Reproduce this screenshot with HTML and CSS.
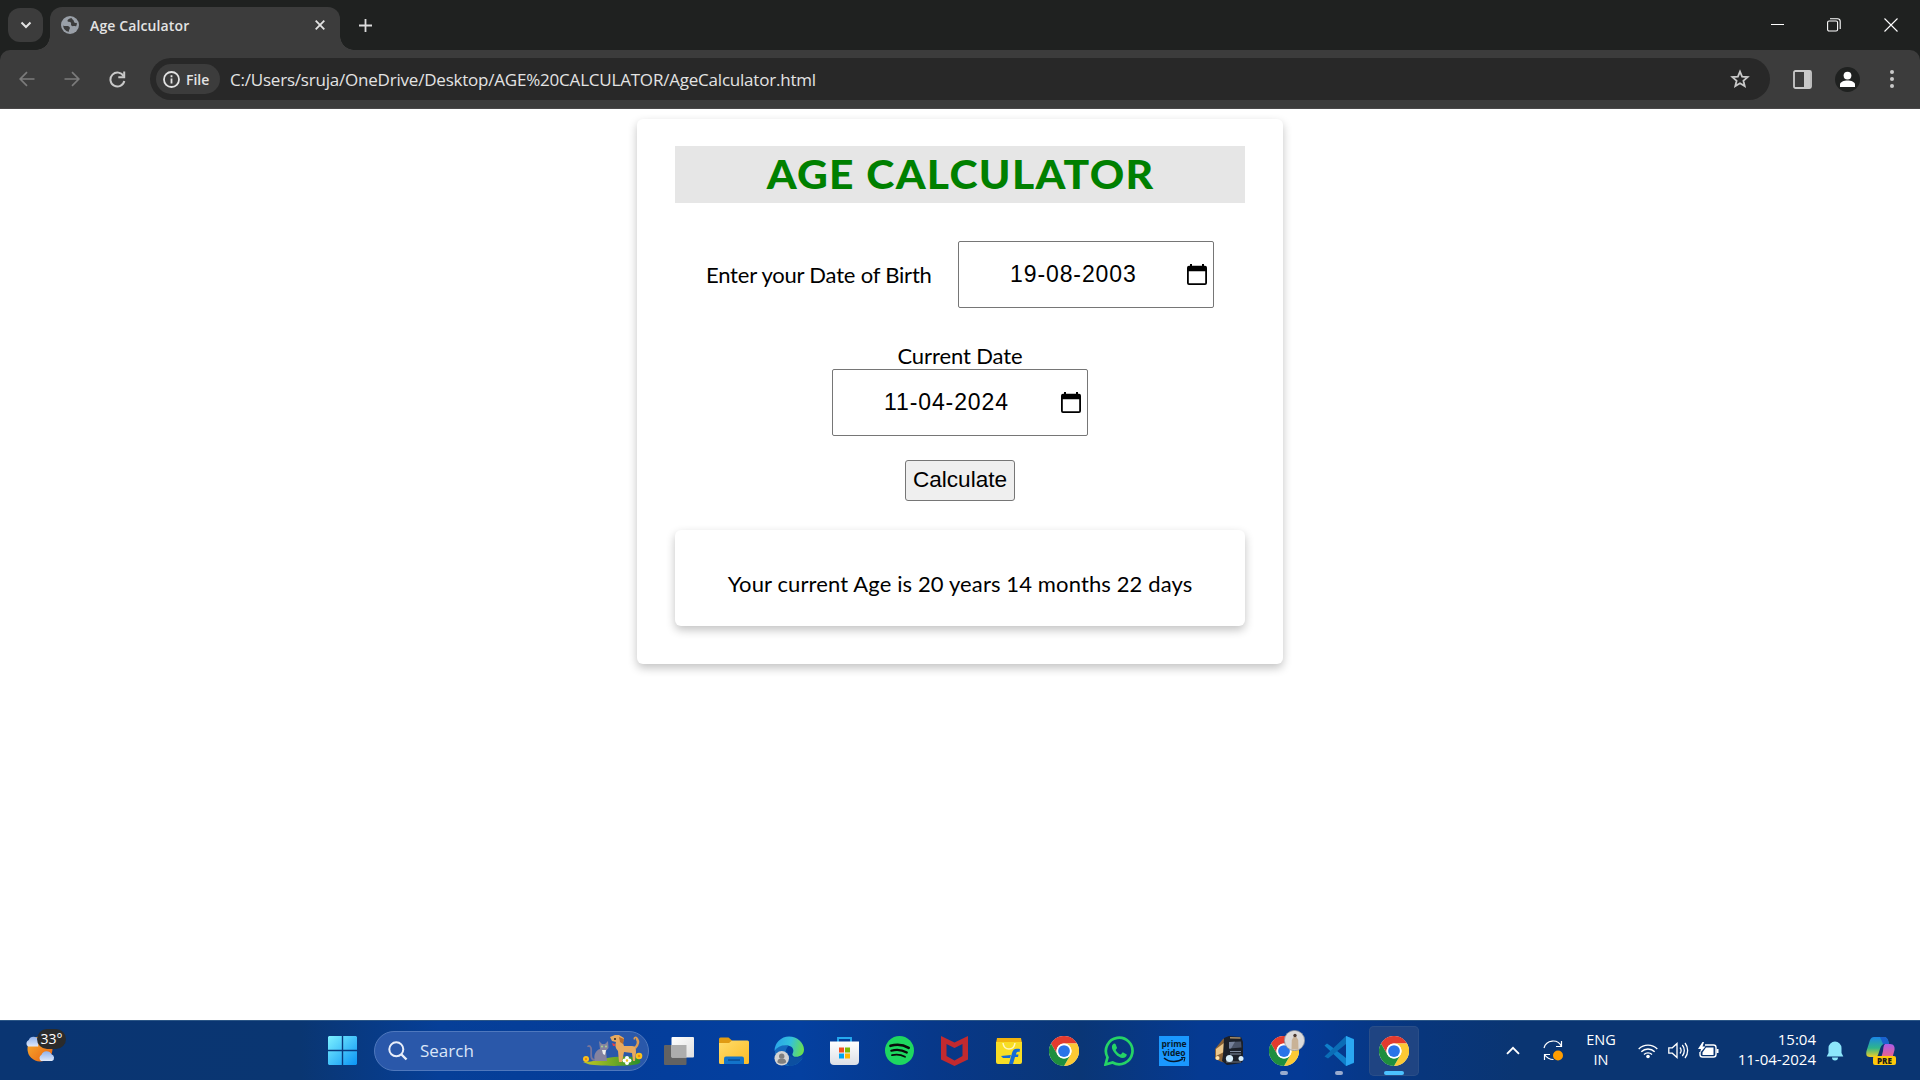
FILE: index.html
```html
<!DOCTYPE html>
<html lang="en">
<head>
<meta charset="utf-8">
<title>Age Calculator</title>
<link rel="stylesheet" href="styles.css">
</head>
<body>
<svg width="0" height="0" class="defs">
  <defs>
    <linearGradient id="win" x1="0" y1="0" x2="1" y2="1"><stop offset="0" stop-color="#7df1ff"/><stop offset="1" stop-color="#0a94f5"/></linearGradient>
    <linearGradient id="sun" x1="0" y1="0" x2="1" y2="1"><stop offset="0" stop-color="#f9b233"/><stop offset="1" stop-color="#e8600f"/></linearGradient>
    <linearGradient id="cloud" x1="0" y1="0" x2="0" y2="1"><stop offset="0" stop-color="#8fb2ee"/><stop offset="1" stop-color="#dfe9fb"/></linearGradient>
    <linearGradient id="folder" x1="0" y1="0" x2="1" y2="1"><stop offset="0" stop-color="#ffdc6b"/><stop offset="1" stop-color="#fcbc26"/></linearGradient>
    <linearGradient id="edgeTop" x1="0" y1="0.4" x2="1" y2="0.6"><stop offset="0" stop-color="#2aa4e8"/><stop offset="0.5" stop-color="#33c1dc"/><stop offset="1" stop-color="#6be04b"/></linearGradient>
    <linearGradient id="bag" x1="0" y1="0" x2="0" y2="1"><stop offset="0" stop-color="#fff"/><stop offset="1" stop-color="#dcdfe6"/></linearGradient>
    <linearGradient id="white" x1="0" y1="0" x2="1" y2="1"><stop offset="0" stop-color="#fff"/><stop offset="1" stop-color="#dfdfdf"/></linearGradient>
    <linearGradient id="cop1" x1="0" y1="0" x2="0" y2="1"><stop offset="0" stop-color="#1b86e6"/><stop offset="0.55" stop-color="#2fb58a"/><stop offset="1" stop-color="#f2cf25"/></linearGradient>
    <linearGradient id="cop2" x1="0" y1="0" x2="0" y2="1"><stop offset="0" stop-color="#a95be8"/><stop offset="0.6" stop-color="#e0609e"/><stop offset="1" stop-color="#f58a52"/></linearGradient>
    <linearGradient id="hill" x1="0" y1="0" x2="1" y2="0"><stop offset="0" stop-color="#c2c822"/><stop offset="1" stop-color="#2a8f2c"/></linearGradient>
    <symbol id="chrome" viewBox="0 0 48 48">
      <circle cx="24" cy="24" r="24" fill="#fff"/>
      <path fill="#e33b2e" d="M3.2 12A24 24 0 0 1 44.8 12H24A12 12 0 0 0 13.6 30Z"/>
      <path fill="#fcc934" d="M44.8 12A24 24 0 0 1 24 48L34.4 30A12 12 0 0 0 24 12Z"/>
      <path fill="#1e8e3e" d="M24 48A24 24 0 0 1 3.2 12L13.6 30A12 12 0 0 0 34.4 30Z"/>
      <circle cx="24" cy="24" r="12" fill="#fff"/><circle cx="24" cy="24" r="9.4" fill="#2a73e8"/>
    </symbol>
  </defs>
</svg>

<header class="tabstrip">
  <button class="tab-search"><svg width="12" height="8" viewBox="0 0 12 8"><path d="M1.5 1.5 6 6l4.500-4.500" fill="none" stroke="#e3e3e3" stroke-width="2"/></svg></button>
  <div class="tab">
    <svg class="globe" width="18" height="18" viewBox="0 0 18 18"><circle cx="9" cy="9" r="9" fill="#9aa0a8"/><path d="M2.200 9.500C4 11 7 9 8.500 11c1.200 1.700-1 2.500-.5 4.800C5 15.500 2.300 13 2.200 9.500ZM10.500 2C8 2.500 6.300 3.500 6.500 5c.2 1.400 2.500.6 3.300 1.600.8 1.200-.4 2.200.8 3.200 1.500 1 2.500-.6 4.400.7.800-1.300 1-2.500.8-3.700-1.800.6-2.900-.3-3-1.800-.1-1.200-1.600-1.400-2.300-3Z" fill="#3c3c3c"/></svg>
    <span class="tab-title">Age Calculator</span>
    <svg width="10" height="10" viewBox="0 0 10 10"><path d="m.7.7 8.600 8.600M9.300.7.7 9.300" stroke="#e3e3e3" stroke-width="1.800"/></svg>
  </div>
  <svg class="plus" width="13" height="13" viewBox="0 0 13 13"><path d="M6.500 0v13M0 6.500h13" stroke="#dcdcdc" stroke-width="1.800"/></svg>
  <div class="window-buttons">
    <svg width="13" height="13" viewBox="0 0 13 13"><path d="M0 6.500h13" stroke="#fff"/></svg>
    <svg width="14" height="14" viewBox="0 0 14 14"><rect x=".6" y="3" width="10" height="10" rx="1.500" fill="none" stroke="#fff" stroke-width="1.100"/><path d="M3 .8h7.500a2.700 2.700 0 0 1 2.700 2.700V11" fill="none" stroke="#fff" stroke-width="1.100"/></svg>
    <svg width="14" height="14" viewBox="0 0 14 14"><path d="m.5.5 13 13m0-13-13 13" stroke="#fff" stroke-width="1.100"/></svg>
  </div>
</header>

<nav class="toolbar">
  <svg width="16" height="16" viewBox="0 0 16 16"><path d="M15.500 8H2M8 1.200 1.200 8 8 14.800" fill="none" stroke="#7b7b7b" stroke-width="1.700"/></svg>
  <svg width="16" height="16" viewBox="0 0 16 16"><path d="M.5 8H14M8 1.200 14.800 8 8 14.800" fill="none" stroke="#7b7b7b" stroke-width="1.700"/></svg>
  <svg width="17" height="17" viewBox="0 0 17 17"><path d="M14.600 5.200A7 7 0 1 0 15.300 10" fill="none" stroke="#c9c9c9" stroke-width="2"/><path d="M15.200.5v5.800H9.300" fill="none" stroke="#c9c9c9" stroke-width="2"/></svg>
  <div class="omnibox">
    <div class="chip">
      <svg width="17" height="17" viewBox="0 0 17 17"><circle cx="8.500" cy="8.500" r="7.500" fill="none" stroke="#e3e3e3" stroke-width="1.800"/><path d="M8.500 7.500v5M8.500 4.300v1.900" stroke="#e3e3e3" stroke-width="1.800"/></svg>
      <span>File</span>
    </div>
    <span class="url">C:/Users/sruja/OneDrive/Desktop/AGE%20CALCULATOR/AgeCalculator.html</span>
    <svg class="star" width="20" height="20" viewBox="0 0 20 20"><path d="m10 2.600 2.100 5.100 5.500.4-4.200 3.600 1.300 5.400L10 14.200l-4.700 2.900 1.300-5.400L2.400 8.100l5.500-.4Z" fill="none" stroke="#c9c9c9" stroke-width="1.800"/></svg>
  </div>
  <svg class="panel" width="19" height="19" viewBox="0 0 19 19"><rect x="1" y="1" width="17" height="17" rx="1.500" fill="none" stroke="#c9c9c9" stroke-width="1.800"/><path d="M11 1h6v17h-6Z" fill="#c9c9c9"/></svg>
  <svg class="profile" width="25" height="25" viewBox="0 0 25 25"><circle cx="12.500" cy="12.500" r="12.500" fill="#1f2120"/><circle cx="12.500" cy="8.600" r="3.900" fill="#fff"/><path d="M5 20v-2.500c0-2.500 4-4 7.500-4s7.500 1.500 7.500 4V20Z" fill="#fff"/></svg>
  <svg width="6" height="20" viewBox="0 0 6 20"><g fill="#c9c9c9"><circle cx="3" cy="3" r="2"/><circle cx="3" cy="10" r="2"/><circle cx="3" cy="17" r="2"/></g></svg>
</nav>

<main class="page">
  <section class="card">
    <h1><span>AGE CALCULATOR</span></h1>
    <div class="birth-row">
      <span class="label label-birth">Enter your Date of Birth</span>
      <div class="date-field"><span>19-08-2003</span><svg width="20" height="22" viewBox="0 0 20 22"><path d="M4 0v3M16 0v3" stroke="#000" stroke-width="2"/><path d="M2 1.800h16a2 2 0 0 1 2 2V19a2 2 0 0 1-2 2H2a2 2 0 0 1-2-2V3.800a2 2 0 0 1 2-2ZM1.800 7.200v12h16.400v-12Z" fill="#000" fill-rule="evenodd"/></svg></div>
    </div>
    <span class="label label-current">Current Date</span>
    <div class="date-field"><span>11-04-2024</span><svg width="20" height="22" viewBox="0 0 20 22"><path d="M4 0v3M16 0v3" stroke="#000" stroke-width="2"/><path d="M2 1.800h16a2 2 0 0 1 2 2V19a2 2 0 0 1-2 2H2a2 2 0 0 1-2-2V3.800a2 2 0 0 1 2-2ZM1.800 7.200v12h16.400v-12Z" fill="#000" fill-rule="evenodd"/></svg></div>
    <button class="calculate">Calculate</button>
    <div class="result">Your current Age is 20 years 14 months 22 days</div>
  </section>
</main>

<footer class="taskbar">
  <div class="weather">
    <svg width="32" height="30" viewBox="0 0 32 30"><circle cx="15" cy="14" r="12.500" fill="url(#sun)"/><path d="M3 11.500a3.700 3.700 0 0 1 .8-6.500 5 5 0 0 1 9.400 0v6.500Z" fill="url(#cloud)"/><path d="M16 26a3.700 3.700 0 0 1 .5-6.300 5.500 5.500 0 0 1 10-.4A3.600 3.600 0 0 1 27 26Z" fill="url(#cloud)"/></svg>
    <span class="temp">33°</span>
  </div>
  <div class="apps">
    <div class="app"><svg width="29" height="29" viewBox="0 0 29 29"><path d="M1 0h12.800v13.800H0V1ZM15.200 0H28l1 1v12.800H15.200ZM0 15.200h13.800V29H1l-1-1ZM15.200 15.200H29V28l-1 1H15.200Z" fill="url(#win)"/></svg></div>
    <div class="search">
      <svg width="20" height="20" viewBox="0 0 20 20"><circle cx="8.300" cy="8.300" r="7" fill="none" stroke="#e8eefa" stroke-width="2"/><path d="m13.500 13.500 5 5" stroke="#e8eefa" stroke-width="2.400"/></svg>
      <span>Search</span>
      <svg class="pets" width="60" height="32" viewBox="0 0 60 32">
        <path d="M0 27C8 27 12 25.500 20 24c14-3 26-3 33-1 6 2 5 5 2 6-10 3-45 2-50 0Z" fill="url(#hill)"/>
        <path d="M12 25c-6 0-3-8-4-12-1-3-3-2-3-1" fill="none" stroke="#77759a" stroke-width="1.800"/>
        <path d="M12 26c-2-6 1-11 5-12l-1-8 3 3h3l3-3 .5 7-2.500 3 1 10Z" fill="#85839f"/><path d="M19 15h4l-1 5-2-1Z" fill="#eee"/><circle cx="19" cy="11.500" r=".9" fill="#b0dd8c"/><circle cx="23" cy="11.500" r=".9" fill="#b0dd8c"/>
        <path d="M52 13c3-3 4-6 2-9-1-2-3-1-2 0" fill="none" stroke="#dc9c52" stroke-width="2.500"/>
        <path d="m27 2 5-2h4l5 3-1 5 1 3h8c4 0 4 3 4 6l-1 9h-2l-1-8-8-1-2 10h-3l-1-11c-3-3-3-6-2-9l-4-1Z" fill="#e7aa60"/><path d="m36 2 5 2-1 5-3-2Z" fill="#b86b2c"/><circle cx="32" cy="4" r="1" fill="#222"/><path d="m29 8 3 1v2h-2Z" fill="#e54245"/>
        <g fill="#fbc31c"><circle cx="3" cy="24" r="3"/><circle cx="56" cy="21" r="3.300"/></g><circle cx="3" cy="24" r="1.200" fill="#f08a0e"/><circle cx="56" cy="21" r="1.300" fill="#f08a0e"/>
        <g fill="#fff"><circle cx="44" cy="23" r="2"/><circle cx="41.500" cy="25.500" r="2"/><circle cx="46.500" cy="25.500" r="2"/><circle cx="44" cy="28" r="2"/></g><circle cx="44" cy="25.500" r="1.200" fill="#f4c322"/>
      </svg>
    </div>
    <div class="app"><svg width="30" height="28" viewBox="0 0 30 28"><rect y="8" width="22.500" height="20" rx="1" fill="#626262"/><rect x="7.500" width="22.500" height="20.500" rx="1" fill="url(#white)"/><path d="M7.500 8h15v12.500h-15Z" fill="#adadad"/></svg></div>
    <div class="app"><svg width="30" height="30" viewBox="0 0 30 30"><path d="M0 3a1.500 1.500 0 0 1 1.500-1.500h8L13 4.500V11H0Z" fill="#e09b13"/><path d="M0 7h10l3-2.500h15.500A1.500 1.500 0 0 1 30 6v20.500a1.500 1.500 0 0 1-1.500 1.500h-27A1.500 1.500 0 0 1 0 26.500Z" fill="url(#folder)"/><path d="M5 28v-5.500A2 2 0 0 1 7 20.500h16a2 2 0 0 1 2 2V28Z" fill="#1273ca"/><rect x="9" y="23.300" width="12" height="1.500" fill="#0a4c94"/></svg></div>
    <div class="app"><svg width="30" height="30" viewBox="0 0 31 31"><path d="M1 15.500C3 9 9 7 15 10c-5 5-3 13 4 15.500 5 1.500 9-1 11-3-3 5-8 8.500-14 8.500C7 31 0 24 1 15.500Z" fill="#1668bd"/><path d="M15 12c-3 4-1 9 6 10 4 .3 8 0 9-2-1 6-7 11-14 11-6-3-6-12-1-19Z" fill="#0c4fa0"/><path d="M.5 15.500A15 15 0 0 1 15.500.5C24 .5 31 7 31 14c0 5-4 7.500-8 7.500-3 0-4-1.500-4-2.500s1-1.500 1-4c0-3-3-5.500-8-5.500-5 0-9 2-11.500 6Z" fill="url(#edgeTop)"/><circle cx="8" cy="23" r="7.500" fill="#d3d3d3"/><circle cx="8" cy="20.800" r="2.800" fill="#7f7f7f"/><path d="M3.500 27c0-3 2-3.500 4.500-3.500s4.500.5 4.500 3.500c-2.500 2.200-6.500 2.200-9 0Z" fill="#7f7f7f"/></svg></div>
    <div class="app"><svg width="29" height="30" viewBox="0 0 29 30"><path d="M8 7V2h13v5" fill="none" stroke="#25a9ef" stroke-width="1.900"/><path d="M0 5.500h29V25a4 4 0 0 1-4 4H4a4 4 0 0 1-4-4Z" fill="url(#bag)"/><path d="M9 11.500h5v5H9Z" fill="#f25022"/><path d="M15 11.500h5v5h-5Z" fill="#7fba00"/><path d="M9 17.500h5v5H9Z" fill="#00a4ef"/><path d="M15 17.500h5v5h-5Z" fill="#ffb900"/></svg></div>
    <div class="app"><svg width="29" height="29" viewBox="0 0 29 29"><circle cx="14.500" cy="14.500" r="14.500" fill="#1ed760"/><g fill="none" stroke="#0a0a0a" stroke-linecap="round"><path d="M5.500 9.800c6-1.700 13-1 18.200 2" stroke-width="2.600"/><path d="M6.300 14.700c5-1.500 11-.8 15.500 1.800" stroke-width="2.200"/><path d="M7 19.200c4.500-1.200 9-.6 13 1.600" stroke-width="1.800"/></g></svg></div>
    <div class="app"><svg width="27" height="30" viewBox="0 0 27 30"><path d="m0 0 13.500 6.500L27 0v23.500L13.500 30 0 23.500Zm5.500 8v12l8 4.500 8-4.500V8l-8 4Z" fill="#c22a2f"/></svg></div>
    <div class="app"><svg width="28" height="28" viewBox="0 0 28 28"><path d="M2 1h24l1 5H1Z" fill="#f1b40f"/><path d="M1 5h26v20a2 2 0 0 1-2 2H3a2 2 0 0 1-2-2Z" fill="#f8dd25"/><path d="M8 6c1 8 11 8 12 0" fill="none" stroke="#fff6bd" stroke-width="1.500"/><path d="M25 12c-5-1-7 0-8 4l-3 11h4l2-7h3l.5-2.500H21c.5-2.500 1-3 3.500-2.500ZM6 19l10-1-1 3H8Z" fill="#156ad6"/></svg></div>
    <div class="app"><svg width="30" height="30"><use href="#chrome"/></svg></div>
    <div class="app"><svg width="30" height="30" viewBox="0 0 30 30"><path d="m1.500 28.500 2-7.200A13.300 13.300 0 1 1 8.600 26.500Z" fill="none" stroke="#25d366" stroke-width="2.700"/><path d="M10.500 7.500c-1 0-2.600 1.200-2.600 3.600 0 4.200 6.200 11 10.800 11 2.300 0 4-1.500 4.100-3.600l-4-2.200-2 2.300c-2.300-.8-4.200-2.600-5.200-4.700l1.500-2-1.600-4Z" fill="#25d366"/></svg></div>
    <div class="app"><div class="prime"><span>prime</span><span>video</span><svg width="23" height="6" viewBox="0 0 23 6"><path d="M1 1c5 4.500 14 4.500 19 .7" fill="none" stroke="#06182b" stroke-width="1.600"/><path d="M18 .5h4l-1 4" fill="none" stroke="#06182b"/></svg></div></div>
    <div class="app"><svg width="30" height="30" viewBox="0 0 30 30"><path d="m1 13 8-10 5-2v26l-6-1-7-3Z" fill="#8a6236"/><path d="m2 13 8-6v9l-8 4Z" fill="#ecc78b"/><path d="m10 2 5-2 12 1 2 5v19l-2 2-6 1-8 1-5-4 1-6Z" fill="#1c2029"/><path d="M16 1.800 26.500 2" stroke="#a58c68" stroke-width="1.500"/><path d="m15 6 12-.5.500 6L15 12.500Z" fill="#4b5468"/><path d="m15 6 6-.2-4 6.600h-2Z" fill="#76819a"/><path d="M16 15.500h11M16 18h11" stroke="#7f8b9f"/><path d="M12 26h15" stroke="#6f7784"/><circle cx="15.500" cy="22.500" r="3.600" fill="#d8eefb"/><circle cx="27" cy="22.500" r="2.500" fill="#d8eefb"/><circle cx="3.500" cy="22" r="2" fill="#ffe3ab"/></svg></div>
    <div class="app running"><svg width="30" height="30"><use href="#chrome"/></svg>
      <svg class="avatar" width="21" height="21" viewBox="0 0 21 21"><circle cx="10.500" cy="10.500" r="10.100" fill="#dcdbdb" stroke="#8c909a" stroke-width=".8"/><path d="M7.500 19.500 7.800 10l1.700-3h3l1.700 3 .3 9.500Z" fill="#c9b296"/><circle cx="11" cy="5.500" r="1.700" fill="#4a3a32"/></svg></div>
    <div class="app running"><svg width="30" height="30" viewBox="0 0 30 30"><path d="m22 0 8 3v24l-8 3L2 11l-1.500-1.600L3 7.500l4 2.800L22 22Z" fill="#0f7fca"/><path d="M22 8 4 22.500 .5 20.600 22 0Z" fill="#0b6db6"/><path d="m22 0 8 3.500v23L22 30Z" fill="#2aa7f2"/></svg></div>
    <div class="app active"><svg width="30" height="30"><use href="#chrome"/></svg></div>
  </div>
  <div class="tray">
    <svg class="chevron" width="14" height="9" viewBox="0 0 14 9"><path d="m1 7.800 6-6 6 6" fill="none" stroke="#fff" stroke-width="1.900"/></svg>
    <svg class="sync" width="21" height="21" viewBox="0 0 21 21"><g fill="none" stroke="#fff" stroke-width="1.200"><path d="M1 8A9.300 9.300 0 0 1 18.500 6.500M18.500 1v5.500H13"/><path d="M1.500 20v-5.500H7M1.500 14.500c2 3 5 5 9 5"/></g><circle cx="15" cy="15.500" r="5" fill="#ff9d00"/></svg>
    <div class="lang"><span>ENG</span><span>IN</span></div>
    <svg class="wifi" width="20" height="16" viewBox="0 0 20 16"><g fill="none" stroke="#fff" stroke-width="1.400"><path d="M.7 6a13.200 13.200 0 0 1 18.600 0M3.300 8.800a9.500 9.500 0 0 1 13.400 0M6 11.500a5.700 5.700 0 0 1 8 0"/></g><circle cx="10" cy="13.500" r="1.800" fill="#fff"/></svg>
    <svg class="speaker" width="21" height="17" viewBox="0 0 21 17"><g fill="none" stroke="#fff" stroke-width="1.300"><path d="M.8 5.800h3.500L9 1.500v14l-4.700-4.300H.8ZM12 5.500a5 5 0 0 1 0 6M14.300 3a8.500 8.500 0 0 1 0 11M17 1a12 12 0 0 1 0 15"/></g></svg>
    <svg class="battery" width="21" height="17" viewBox="0 0 21 17"><path d="M7 3h8.500A2.500 2.500 0 0 1 18 5.500v7a2.500 2.500 0 0 1-2.500 2.500h-11A2.500 2.500 0 0 1 2 12.500V10" fill="none" stroke="#fff" stroke-width="1.400"/><path d="M19.500 7v4" stroke="#fff" stroke-width="2"/><path d="M8 5.500h7.500V13H4.500v-2.500ZM4.500 0 0 7h3L2 11l5.500-6.500h-3L6 0Z" fill="#fff"/></svg>
    <div class="clock"><span>15:04</span><span>11-04-2024</span></div>
    <svg class="bell" width="18" height="20" viewBox="0 0 18 20"><path d="M9 .5a6.500 6.500 0 0 1 6.500 6.500v5l1.800 3.500H.7L2.500 12V7A6.500 6.500 0 0 1 9 .5ZM6 16.500h6a3 3 0 0 1-6 0Z" fill="#8ce6fb"/></svg>
    <div class="copilot">
      <svg width="29" height="28" viewBox="0 0 29 28"><path d="M8 0h10c3 0 4 2 5 7h-4c-3 0-4 2-5 5l-2 6c-1 2-2 2-4 2H4c-4 0-4-3-3.500-6L4 3c1-2 2-3 4-3Z" fill="url(#cop1)"/><path d="M14 0h4c3 0 4 2 5 7h-6Z" fill="#1b62cf"/><path d="M19 7h5c4 0 5 3 4.500 6l-3 11H12c3 0 3-3 4-6l1-4c.5-3 0-5 2-7Z" fill="url(#cop2)"/></svg>
      <span class="pre">PRE</span>
    </div>
  </div>
</footer>
</body>
</html>
```
FILE: styles.css
```css
* { box-sizing: border-box; }
html, body { height: 100%; }
body {
  margin: 0;
  display: flex;
  flex-direction: column;
  overflow: hidden;
  background: #fff;
  font-family: "Open Sans", "Noto Sans", sans-serif;
}
svg { display: block; flex: none; }
.defs { position: absolute; }

.tabstrip {
  flex: none;
  height: 50px;
  display: flex;
  align-items: flex-start;
  padding-left: 8px;
  background: #1f2120;
}
.tab-search {
  width: 35px;
  height: 34px;
  margin-top: 8px;
  padding: 0;
  border: 0;
  border-radius: 12px;
  background: #3c3c3c;
  display: flex;
  align-items: center;
  justify-content: center;
}
.tab {
  position: relative;
  width: 290px;
  height: 43px;
  margin: 7px 0 0 7px;
  padding: 0 15px 7px 11px;
  border-radius: 12px 12px 0 0;
  background: #3c3c3c;
  display: flex;
  align-items: center;
}
.tab::before, .tab::after {
  content: "";
  position: absolute;
  bottom: 0;
  width: 14px;
  height: 14px;
}
.tab::before { left: -14px; background: radial-gradient(circle at 0 0, transparent 13.5px, #3c3c3c 14px); }
.tab::after { right: -14px; background: radial-gradient(circle at 100% 0, transparent 13.5px, #3c3c3c 14px); }
.tab-title {
  flex: 1;
  margin-left: 11px;
  color: #e3e3e3;
  font-size: 14px;
  font-weight: 600;
  letter-spacing: 0.12px;
}
.plus { margin: 19px 0 0 19px; }
.window-buttons {
  margin-left: auto;
  padding: 18px 22px 0 0;
  display: flex;
  gap: 43px;
}

.toolbar {
  flex: none;
  height: 59px;
  display: flex;
  align-items: center;
  padding: 0 25px 0 19px;
  border-bottom: 1px solid #4a4849;
  border-radius: 10px 10px 0 0;
  background: #3c3c3c;
  box-shadow: 0 -10px 0 0 #1f2120;
  gap: 29px;
}
/* keeps the tab joined to the toolbar above the corner backing */
.tabstrip { position: relative; z-index: 1; background: #1f2120; }
.omnibox {
  flex: 1;
  height: 42px;
  margin-left: -5px;
  padding: 0 20px 0 6px;
  border-radius: 21px;
  background: #282828;
  display: flex;
  align-items: center;
}
.chip {
  width: 64px;
  height: 30px;
  padding-left: 7px;
  border-radius: 15px;
  background: #3c3c3c;
  display: flex;
  align-items: center;
  gap: 6px;
  color: #e3e3e3;
  font-size: 14px;
  font-weight: 600;
}
.url { margin-left: 10px; color: #e3e3e3; font-size: 17px; letter-spacing: -0.21px; }
.star { margin-left: auto; }
.panel { margin-left: -6px; }
.profile { margin: 0 0 0 -6px; }

.page {
  flex: 1;
  padding-top: 10px;
  display: flex;
  align-items: flex-start;
  justify-content: center;
  font-family: Lato, "Open Sans", sans-serif;
  color: #000;
}
.card {
  width: 646px;
  height: 545px;
  padding: 27px 38px 38px;
  border-radius: 6px;
  box-shadow: 0 4px 10px rgba(0, 0, 0, 0.24);
  display: flex;
  flex-direction: column;
  align-items: center;
}
h1 {
  width: 570px;
  height: 57px;
  margin: 0 0 38px;
  padding-left: 1px;
  background: #e6e6e6;
  color: #008000;
  font-size: 39px;
  font-weight: 900;
  line-height: 56px;
  text-align: center;
  letter-spacing: 1.2px;
  white-space: nowrap;
}
h1 span { display: inline-block; transform: scaleX(1.092); }
.birth-row { display: flex; align-items: center; gap: 27px; margin-bottom: 33px; }
.label { font-size: 22px; line-height: 28px; white-space: nowrap; }
.label-birth { width: 225px; letter-spacing: -0.2px; }
.label-current { height: 28px; line-height: 30px; letter-spacing: -0.1px; }
.date-field {
  width: 256px;
  height: 67px;
  padding: 0 6px 0 51px;
  border: 1px solid #767676;
  border-radius: 2px;
  display: flex;
  align-items: center;
  justify-content: space-between;
  font: 23px "Liberation Sans", sans-serif;
  letter-spacing: 0.9px;
}
.calculate {
  width: 110px;
  height: 41px;
  margin: 24px 0 29px;
  padding: 0 0 2px;
  border: 1px solid #767676;
  border-radius: 3px;
  background: #efefef;
  color: #000;
  font: 22.6px "Liberation Sans", sans-serif;
}
.result {
  width: 570px;
  height: 96px;
  padding-top: 12px;
  border-radius: 6px;
  box-shadow: 0 4px 10px rgba(0, 0, 0, 0.24);
  font-size: 22px;
  line-height: 84px;
  letter-spacing: 0.12px;
  text-align: center;
  white-space: nowrap;
}

.taskbar {
  flex: none;
  height: 60px;
  display: flex;
  border-top: 1px solid #2b5686;
  background: linear-gradient(90deg, #0a3572 0, #0a3672 300px, #063f98 440px, #043d9a 600px, #0440a0 800px, #07388a 930px, #0a3676 1080px, #053a92 1200px, #043a96 1300px, #08367c 1420px, #0a3572 1520px);
  color: #fff;
}
.weather { position: relative; width: 317px; padding: 14px 0 0 25px; }
.temp {
  position: absolute;
  left: 37px;
  top: 8px;
  width: 29px;
  height: 20px;
  border-radius: 10px;
  background: #2b2b2b;
  font-size: 14px;
  line-height: 20px;
  text-align: center;
}
.apps { display: flex; align-items: center; gap: 5px; }
.app {
  position: relative;
  width: 50px;
  height: 50px;
  display: flex;
  align-items: center;
  justify-content: center;
}
.search {
  width: 275px;
  height: 40px;
  margin-left: 2px;
  padding: 0 5px 0 13px;
  border: 1px solid #4f78bd;
  border-radius: 20px;
  background: #2a58aa;
  display: flex;
  align-items: center;
  gap: 12px;
  color: #dbe6f8;
  font-size: 17px;
}
.pets { margin-left: auto; }
.prime {
  width: 30px;
  height: 30px;
  padding-top: 3px;
  background: #1a98ff;
  color: #06182b;
  display: flex;
  flex-direction: column;
  align-items: center;
  font-size: 8.5px;
  font-weight: 700;
  line-height: 9px;
}
.avatar { position: absolute; left: 25px; top: 4px; }
.running::after, .active::after {
  content: "";
  position: absolute;
  bottom: 1px;
  left: 21px;
  width: 8px;
  height: 4px;
  border-radius: 2px;
  background: #99abce;
}
.active { border-radius: 5px; background: #1f4482; box-shadow: inset 0 0 0 1px #2a4e88; }
.active::after { left: 15px; width: 20px; background: #4cc2ff; }

.tray { margin-left: auto; padding-right: 25px; display: flex; align-items: center; }
.sync { margin-left: 23px; }
.lang, .clock { padding-bottom: 3px; display: flex; flex-direction: column; font-size: 15px; line-height: 20px; }
.lang { width: 40px; margin-left: 17px; padding-bottom: 1px; align-items: center; font-size: 14.5px; }
.wifi { margin-left: 17px; }
.speaker { margin-left: 10px; }
.battery { margin-left: 9px; }
.clock { width: 89px; margin-left: 8px; align-items: flex-end; }
.bell { margin-left: 10px; }
.copilot { position: relative; margin-left: 22px; }
.pre {
  position: absolute;
  left: 7px;
  top: 19px;
  width: 23px;
  height: 9px;
  border-radius: 2px;
  background: #ffc80a;
  color: #1c1c1c;
  font-size: 8px;
  font-weight: 800;
  line-height: 9px;
  text-align: center;
}
```
